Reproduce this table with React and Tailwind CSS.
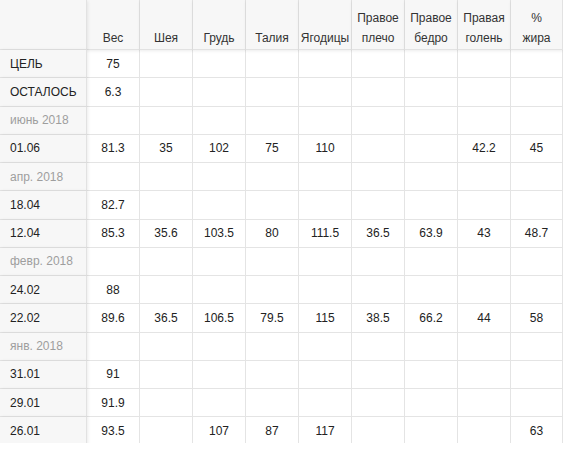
import React from "react";

const cols = [["Вес"], ["Шея"], ["Грудь"], ["Талия"], ["Ягодицы"], ["Правое", "плечо"], ["Правое", "бедро"], ["Правая", "голень"], ["%", "жира"]];

const rows = [
  { label: "ЦЕЛЬ", v: ["75"] },
  { label: "ОСТАЛОСЬ", v: ["6.3"] },
  { month: "июнь 2018" },
  { label: "01.06", v: ["81.3", "35", "102", "75", "110", "", "", "42.2", "45"] },
  { month: "апр. 2018" },
  { label: "18.04", v: ["82.7"] },
  { label: "12.04", v: ["85.3", "35.6", "103.5", "80", "111.5", "36.5", "63.9", "43", "48.7"] },
  { month: "февр. 2018" },
  { label: "24.02", v: ["88"] },
  { label: "22.02", v: ["89.6", "36.5", "106.5", "79.5", "115", "38.5", "66.2", "44", "58"] },
  { month: "янв. 2018" },
  { label: "31.01", v: ["91"] },
  { label: "29.01", v: ["91.9"] },
  { label: "26.01", v: ["93.5", "", "107", "87", "117", "", "", "", "63"] },
];

export default function App() {
  return (
    <div className="w-[564px] h-[449px] bg-white" style={{ fontFamily: '"Liberation Sans", Arial, sans-serif' }}>
      <div className="h-[443px] w-[563px] overflow-hidden text-[12px] text-[#222]">
        <div className="grid grid-cols-[87px_repeat(8,53px)_52px] grid-rows-[50px_repeat(14,28.25px)]">
          {/* header */}
          <div className="bg-[#f7f7f7] border-r border-b border-[#e2e2e2] relative z-20 shadow-[1px_1px_3px_rgba(0,0,0,0.08)]" />
          {cols.map((c, k) => (
            <div
              key={k}
              className="bg-[#f7f7f7] border-r border-b border-[#e2e2e2] relative z-10 shadow-[0_1px_3px_rgba(0,0,0,0.08)] flex flex-col justify-end items-center text-center leading-[20px] pb-[1px] text-[#333]"
            >
              {c.map((line) => (
                <span key={line}>{line}</span>
              ))}
            </div>
          ))}

          {rows.map((r, i) => (
            <React.Fragment key={i}>
              <div
                className={
                  "bg-[#f7f7f7] border-r border-b border-[#e2e2e2] relative z-20 shadow-[1px_0_3px_rgba(0,0,0,0.08)] flex items-center pl-[10px] whitespace-nowrap " +
                  (r.month ? "text-[#9e9e9e]" : "text-[#222]")
                }
              >
                {r.month || r.label}
              </div>
              {cols.map((c, j) => (
                <div
                  key={j}
                  className="border-r border-b border-[#e4e4e4] flex items-center justify-center text-[#222]"
                >
                  {r.v ? r.v[j] || "" : ""}
                </div>
              ))}
            </React.Fragment>
          ))}
        </div>
      </div>
    </div>
  );
}
